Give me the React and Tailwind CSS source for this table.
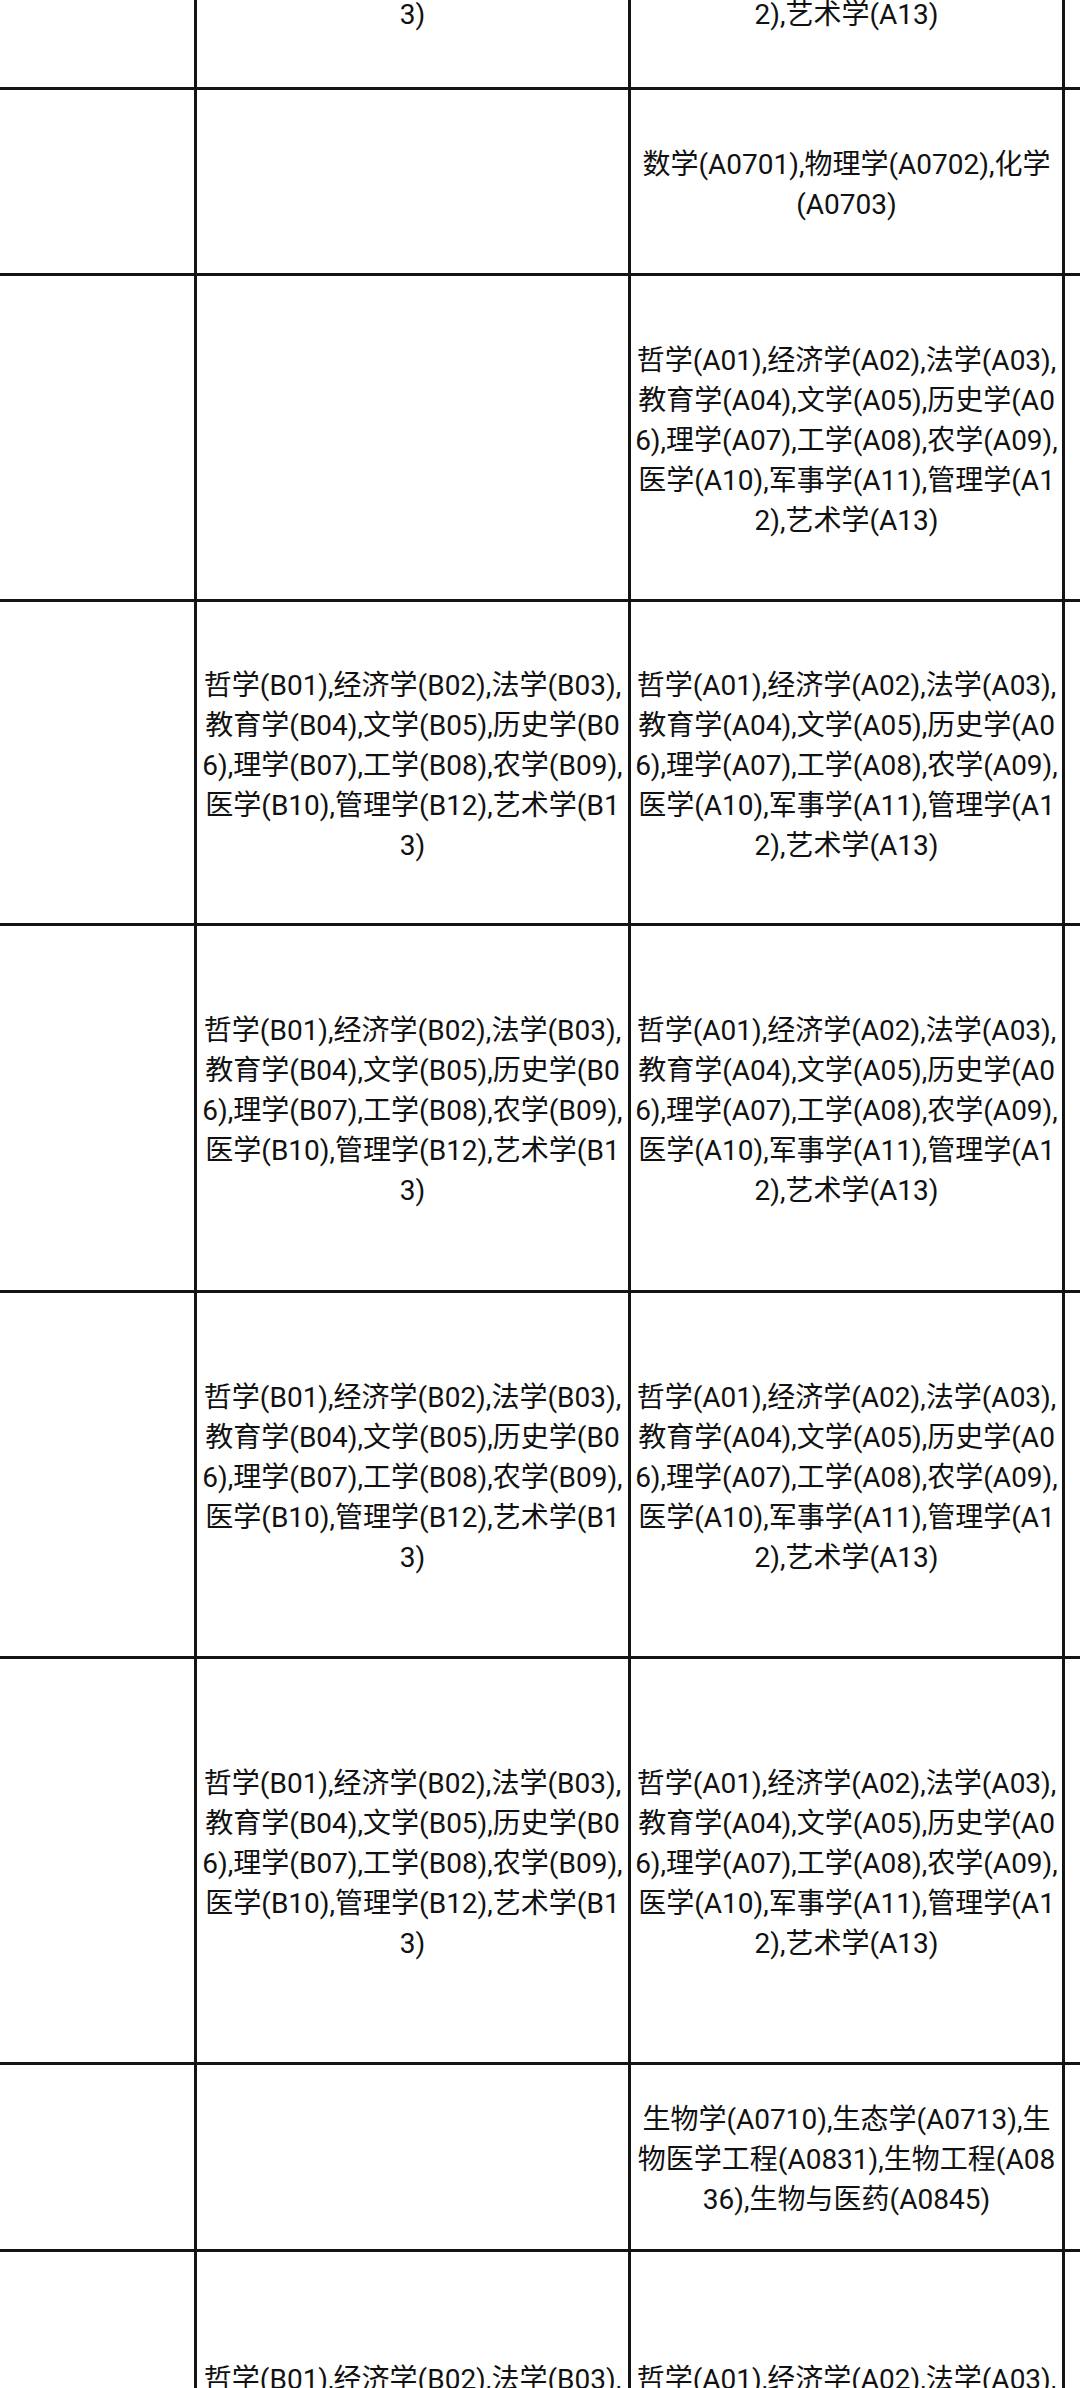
import React from 'react';

const B_LIST = '哲学(B01),经济学(B02),法学(B03),教育学(B04),文学(B05),历史学(B06),理学(B07),工学(B08),农学(B09),医学(B10),管理学(B12),艺术学(B13)';
const A_LIST = '哲学(A01),经济学(A02),法学(A03),教育学(A04),文学(A05),历史学(A06),理学(A07),工学(A08),农学(A09),医学(A10),军事学(A11),管理学(A12),艺术学(A13)';

// row heights include the 3px bottom rule
const rows = [
  { h: 'h-[314px]', b: B_LIST, a: A_LIST },
  { h: 'h-[186px]', b: '', a: '数学(A0701),物理学(A0702),化学(A0703)' },
  { h: 'h-[326px]', b: '', a: A_LIST },
  { h: 'h-[324px]', b: B_LIST, a: A_LIST },
  { h: 'h-[367px]', b: B_LIST, a: A_LIST },
  { h: 'h-[366px]', b: B_LIST, a: A_LIST },
  { h: 'h-[406px]', b: B_LIST, a: A_LIST },
  { h: 'h-[187px]', b: '', a: '生物学(A0710),生态学(A0713),生物医学工程(A0831),生物工程(A0836),生物与医药(A0845)' },
  { h: 'h-[412px]', b: B_LIST, a: A_LIST },
];

const Cell = ({ text }) => (
  <div className="w-[434px] shrink-0 border-l-[3px] border-[#141414] flex items-center justify-center px-[3px] pt-[6px]">
    <p className="text-center break-all text-[28px] leading-[40px] text-[#111]">{text}</p>
  </div>
);

export default function App() {
  return (
    <div
      className="w-[1080px] h-[2388px] overflow-hidden bg-white"
      style={{ fontFamily: 'Roboto, "Noto Sans CJK SC", sans-serif' }}
    >
      <div className="-mt-[224px]">
        {rows.map((row, i) => (
          <div key={i} className={`${row.h} flex border-b-[3px] border-[#141414]`}>
            <div className="w-[194px] shrink-0" />
            <Cell text={row.b} />
            <Cell text={row.a} />
            <div className="flex-1 border-l-[3px] border-[#141414]" />
          </div>
        ))}
      </div>
    </div>
  );
}
